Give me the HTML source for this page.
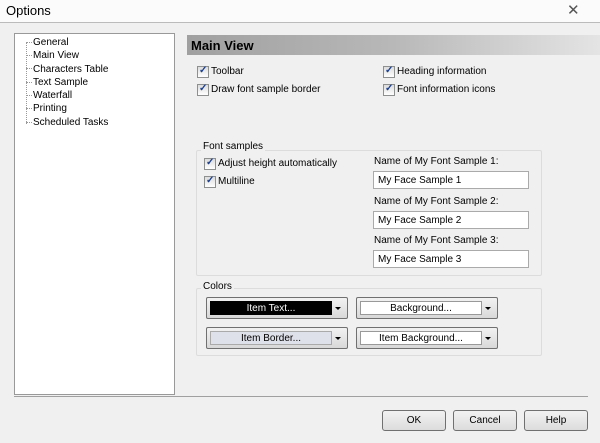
<!DOCTYPE html>
<html><head><style>
*{box-sizing:border-box;margin:0;padding:0}
body{width:600px;height:443px;background:#f0f0f0;font-family:"Liberation Sans",sans-serif;font-size:10px;color:#000;position:relative;overflow:hidden}
.a{position:absolute;white-space:nowrap}
.cb{position:absolute;width:12px;height:12px;border:1px solid #8e8f8f;background:linear-gradient(#dcdcdc,#fff);}
.cb:after{content:"✓";position:absolute;left:1px;top:-2px;font-size:10px;color:#1c3f8c;font-weight:bold}
.inp{position:absolute;width:156px;height:18px;border:1px solid #aaa;background:#fff;padding:3px 4px;font-size:10px}
.grp{position:absolute;border:1px solid #dcdcdc;border-radius:2px}
.dd{position:absolute;height:22px;border:1px solid #707070;border-radius:2px;background:linear-gradient(#f2f2f2,#d8d8d8)}
.dd .in{position:absolute;left:3px;top:3px;height:14px;text-align:center;font-size:10px;line-height:14px;border:1px solid #999}
.dd .ar{position:absolute;right:6px;top:9px;border-left:3px solid transparent;border-right:3px solid transparent;border-top:3px solid #000}
.btn{position:absolute;top:410px;width:64px;height:21px;border:1px solid #707070;border-radius:3px;background:linear-gradient(#f2f2f2,#dcdcdc);text-align:center;line-height:19px;font-size:10px}
.d{position:absolute;left:26px;width:6px;border-top:1px dotted #999}
</style></head><body>
<div class="a" style="left:0;top:0;width:600px;height:22px;background:#fbfbfb"></div>
<div class="a" style="left:6px;top:3px;font-size:13px">Options</div>
<div class="a" style="left:567px;top:1px;font-size:15px;color:#555">✕</div>
<div class="a" style="left:0;top:22px;width:600px;height:1px;background:#bbb"></div>
<div class="a" style="left:14px;top:33px;width:161px;height:362px;background:#fff;border:1px solid #999"></div>
<div class="a" style="left:26px;top:42px;width:1px;height:82px;border-left:1px dotted #999"></div>
<div class="d" style="top:42px"></div><div class="d" style="top:55px"></div><div class="d" style="top:68px"></div><div class="d" style="top:82px"></div><div class="d" style="top:95px"></div><div class="d" style="top:108px"></div><div class="d" style="top:122px"></div>
<div class="a" style="left:33px;top:36px;line-height:13.3px;font-size:10px">General<br>Main View<br>Characters Table<br>Text Sample<br>Waterfall<br>Printing<br>Scheduled Tasks</div>
<div class="a" style="left:187px;top:35px;width:413px;height:20px;background:linear-gradient(90deg,#a0a0a0,#b8b8b8 50%,#e4e4e4)"></div>
<div class="a" style="left:191px;top:38px;font-size:13px;font-weight:bold">Main View</div>
<div class="cb" style="left:197px;top:66px"></div><div class="a" style="left:211px;top:66px">Toolbar</div>
<div class="cb" style="left:197px;top:84px"></div><div class="a" style="left:211px;top:84px">Draw font sample border</div>
<div class="cb" style="left:383px;top:66px"></div><div class="a" style="left:397px;top:66px">Heading information</div>
<div class="cb" style="left:383px;top:84px"></div><div class="a" style="left:397px;top:84px">Font information icons</div>
<div class="grp" style="left:196px;top:150px;width:346px;height:126px"></div>
<div class="a" style="left:201px;top:141px;background:#f0f0f0;padding:0 2px">Font samples</div>
<div class="cb" style="left:204px;top:158px"></div><div class="a" style="left:218px;top:158px">Adjust height automatically</div>
<div class="cb" style="left:204px;top:176px"></div><div class="a" style="left:218px;top:176px">Multiline</div>
<div class="a" style="left:374px;top:156px">Name of My Font Sample 1:</div>
<div class="inp" style="left:373px;top:171px">My Face Sample 1</div>
<div class="a" style="left:374px;top:196px">Name of My Font Sample 2:</div>
<div class="inp" style="left:373px;top:211px">My Face Sample 2</div>
<div class="a" style="left:374px;top:235px">Name of My Font Sample 3:</div>
<div class="inp" style="left:373px;top:250px">My Face Sample 3</div>
<div class="grp" style="left:196px;top:288px;width:346px;height:68px"></div>
<div class="a" style="left:201px;top:281px;background:#f0f0f0;padding:0 2px">Colors</div>
<div class="dd" style="left:206px;top:297px;width:142px"><div class="in" style="width:122px;background:#000;color:#fff;border-color:#000">Item Text...</div><div class="ar"></div></div>
<div class="dd" style="left:356px;top:297px;width:142px"><div class="in" style="width:122px;background:#fff">Background...</div><div class="ar"></div></div>
<div class="dd" style="left:206px;top:327px;width:142px"><div class="in" style="width:122px;background:#dfe1ea;border-color:#aaa">Item Border...</div><div class="ar"></div></div>
<div class="dd" style="left:356px;top:327px;width:142px"><div class="in" style="width:122px;background:#fff">Item Background...</div><div class="ar"></div></div>
<div class="a" style="left:14px;top:396px;width:574px;height:1px;background:#a0a0a0"></div>
<div class="btn" style="left:382px">OK</div>
<div class="btn" style="left:453px">Cancel</div>
<div class="btn" style="left:524px">Help</div>
</body></html>
